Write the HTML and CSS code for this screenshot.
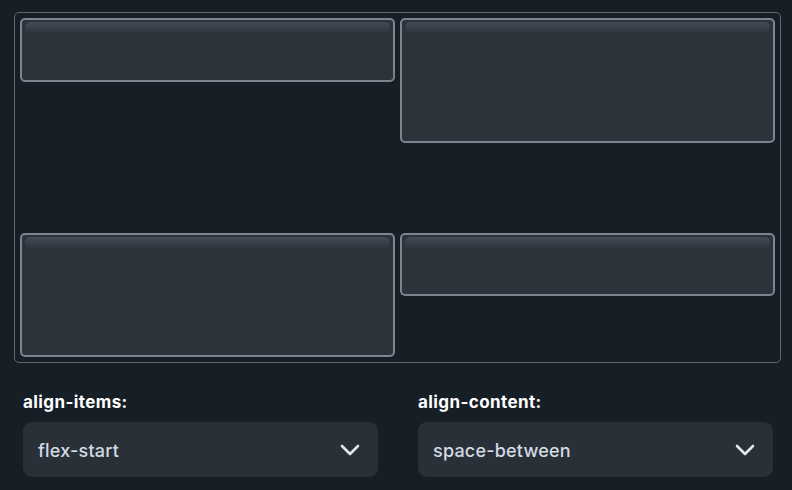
FILE: index.html
```html
<!DOCTYPE html>
<html>
<head>
<meta charset="utf-8">
<link rel="stylesheet" href="styles.css">
</head>
<body>
<div class="page">
  <div class="stage">
    <div class="box h64"></div>
    <div class="box h125"></div>
    <div class="box h124"></div>
    <div class="box h63"></div>
  </div>
  <div class="controls">
    <div class="field">
      <div class="label">align-items:</div>
      <div class="select">
        <span class="value">flex-start</span>
        <svg class="chev" width="20" height="12" viewBox="0 0 20 12"><path d="M2 2 L10 10 L18 2" fill="none" stroke="#e3e8ee" stroke-width="2.6" stroke-linecap="round" stroke-linejoin="round"/></svg>
      </div>
    </div>
    <div class="field">
      <div class="label">align-content:</div>
      <div class="select">
        <span class="value">space-between</span>
        <svg class="chev" width="20" height="12" viewBox="0 0 20 12"><path d="M2 2 L10 10 L18 2" fill="none" stroke="#e3e8ee" stroke-width="2.6" stroke-linecap="round" stroke-linejoin="round"/></svg>
      </div>
    </div>
  </div>
</div>
</body>
</html>
```
FILE: styles.css
```css
html, body {
  margin: 0;
  padding: 0;
  background: #161e26;
}
body {
  width: 792px;
  height: 490px;
  overflow: hidden;
  font-family: Inter, "Open Sans", "Liberation Sans", sans-serif;
}
.page {
  padding: 12px 11px 0 14px;
}
.stage {
  box-sizing: border-box;
  width: 767px;
  height: 351px;
  border: 1px solid #5d6873;
  border-radius: 5px;
  padding: 5px;
  display: flex;
  flex-wrap: wrap;
  align-items: flex-start;
  align-content: space-between;
  column-gap: 5px;
}
.box {
  box-sizing: border-box;
  width: 375px;
  position: relative;
  background: #2c333b;
  border: 2px solid #7b8590;
  border-radius: 5px;
}
.box::before {
  content: "";
  position: absolute;
  left: 3px;
  right: 3px;
  top: 2px;
  height: 12px;
  border-radius: 6px 6px 8px 8px;
  background: linear-gradient(#434b54, rgba(67, 75, 84, 0));
}
.h64 { height: 64px; }
.h125 { height: 125px; }
.h124 { height: 124px; }
.h63 { height: 63px; }
.controls {
  display: grid;
  grid-template-columns: 355px 355px;
  column-gap: 40px;
  padding: 28px 0 0 9px;
}
.label {
  color: #ffffff;
  font-weight: 700;
  font-size: 17px;
  letter-spacing: 0.4px;
  line-height: 22px;
  height: 22px;
  margin-bottom: 9px;
}
.select {
  box-sizing: border-box;
  height: 55px;
  background: #2a3038;
  border-radius: 9px;
  display: flex;
  align-items: center;
  justify-content: space-between;
  padding: 1px 18px 0 15px;
}
.value {
  color: #d3dce5;
  font-size: 18px;
  letter-spacing: 0.2px;
  font-weight: 500;
}
.chev {
  display: block;
  margin-top: -1px;
}
```
